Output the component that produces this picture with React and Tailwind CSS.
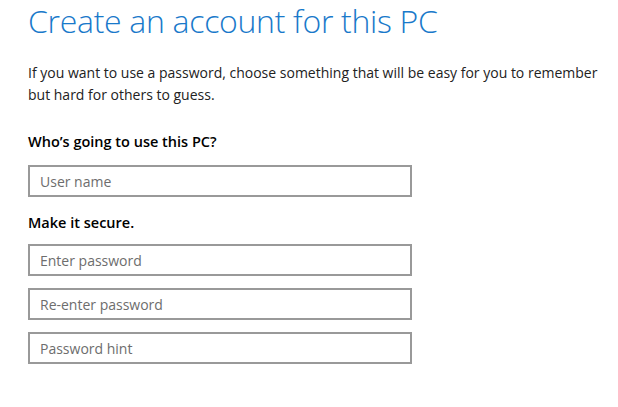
import React from 'react'

const fields = ['Enter password', 'Re-enter password', 'Password hint']

function Field({ placeholder }) {
  return (
    <input
      type="text"
      placeholder={placeholder}
      className="block w-[384px] h-[32px] border-2 border-[#999999] bg-white px-[10px] text-[14px] text-[#333] placeholder:text-[#6d6d6d] outline-none"
    />
  )
}

export default function App() {
  return (
    <div className="w-[618px] h-[407px] bg-white pl-[28px] font-['Open_Sans',sans-serif] text-black overflow-hidden">
      <h1 className="pt-[1px] text-[32px] leading-[40px] font-light text-[#1979ca] tracking-[-0.3px]">
        Create an account for this PC
      </h1>

      <p className="mt-[21px] w-[582px] text-[14px] leading-[22px] text-[#222]">
        If you want to use a password, choose something that will be easy for you to remember but hard for others to guess.
      </p>

      <h2 className="mt-[26px] text-[14.5px] leading-[20px] font-semibold">Who’s going to use this PC?</h2>
      <div className="mt-[13px]">
        <Field placeholder="User name" />
      </div>

      <h2 className="mt-[16px] text-[14.5px] leading-[20px] font-semibold">Make it secure.</h2>
      <div className="mt-[11px] flex flex-col gap-[12px]">
        {fields.map((f) => (
          <Field key={f} placeholder={f} />
        ))}
      </div>
    </div>
  )
}
